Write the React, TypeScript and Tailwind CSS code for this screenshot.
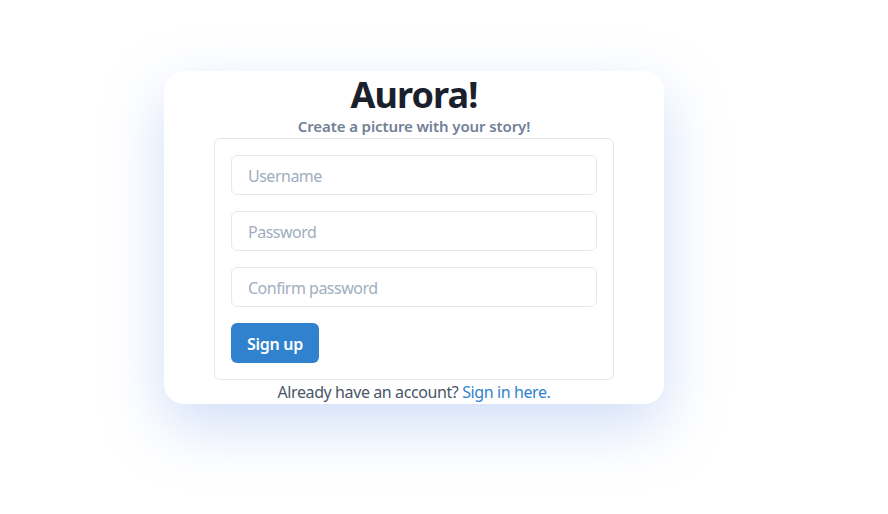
import React from 'react';

const font = { fontFamily: '"Noto Sans", "Liberation Sans", sans-serif' };

const App: React.FC = () => {
  return (
    <div className="min-h-[514px] w-full bg-white pl-[164px] pt-[71px]" style={font}>
      {/* Card */}
      <div className="w-[500px] h-[333px] rounded-[20px] bg-white flex flex-col items-center shadow-[0_22px_60px_0_rgba(190,208,245,0.7)]">
        <h1 className="text-[36px] leading-[43px] pt-[2px] font-bold text-[#1a202c] tracking-[-0.9px]">Aurora!</h1>
        <p className="text-[15px] leading-[24px] -mt-[2px] font-semibold text-[#718096] tracking-[-0.1px]">
          Create a picture with your story!
        </p>

        <form className="w-[400px] border border-[#e2e8f0] rounded-md p-4 flex flex-col gap-4">
          <input
            type="text"
            placeholder="Username"
            className="h-10 w-full rounded-md border border-[#e2e8f0] px-4 pt-[2px] text-base tracking-[-0.5px] text-[#1a202c] placeholder:text-[#a0aec0] outline-none"
          />
          <input
            type="password"
            placeholder="Password"
            className="h-10 w-full rounded-md border border-[#e2e8f0] px-4 pt-[2px] text-base tracking-[-0.5px] text-[#1a202c] placeholder:text-[#a0aec0] outline-none"
          />
          <input
            type="password"
            placeholder="Confirm password"
            className="h-10 w-full rounded-md border border-[#e2e8f0] px-4 pt-[2px] text-base tracking-[-0.5px] text-[#1a202c] placeholder:text-[#a0aec0] outline-none"
          />
          <div>
            <button
              type="button"
              className="h-10 w-[88px] rounded-md bg-[#3182ce] text-white font-semibold text-base pt-[2px] tracking-[-0.3px]"
            >
              Sign up
            </button>
          </div>
        </form>

        <p className="text-base leading-6 text-[#4a5568] tracking-[-0.4px]">
          Already have an account? <a className="text-[#3182ce]">Sign in here.</a>
        </p>
      </div>
    </div>
  );
};

export default App;
